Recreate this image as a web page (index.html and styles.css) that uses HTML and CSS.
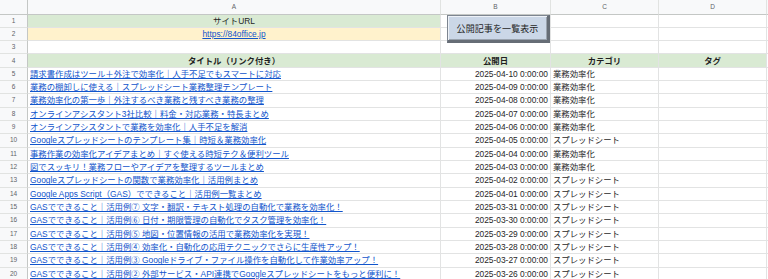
FILE: index.html
```html
<!DOCTYPE html>
<html lang="ja">
<head>
<meta charset="utf-8">
<link rel="stylesheet" href="styles.css">
</head>
<body>
<div class="sheet">
  <div class="row head">
    <div class="c rn"></div><div class="c hc">A</div><div class="c hc">B</div><div class="c hc">C</div><div class="c hc">D</div><div class="c hc"></div>
  </div>
  <div class="row">
    <div class="c rn">1</div><div class="c green center">サイトURL</div><div class="c"></div><div class="c"></div><div class="c"></div><div class="c"></div>
  </div>
  <div class="row">
    <div class="c rn">2</div><div class="c yellow center"><a class="lnk" href="#">https://84office.jp</a></div><div class="c"></div><div class="c"></div><div class="c"></div><div class="c"></div>
  </div>
  <div class="row">
    <div class="c rn">3</div><div class="c"></div><div class="c"></div><div class="c"></div><div class="c"></div><div class="c"></div>
  </div>
  <div class="row">
    <div class="c rn">4</div><div class="c green center b">タイトル（リンク付き）</div><div class="c green center b">公開日</div><div class="c green center b">カテゴリ</div><div class="c green center b">タグ</div><div class="c"></div>
  </div>
  <div class="row"><div class="c rn">5</div><div class="c"><a class="lnk" href="#">請求書作成はツール＋外注で効率化｜人手不足でもスマートに対応</a></div><div class="c right">2025-04-10 0:00:00</div><div class="c">業務効率化</div><div class="c"></div><div class="c"></div></div>
  <div class="row"><div class="c rn">6</div><div class="c"><a class="lnk" href="#">業務の棚卸しに使える｜スプレッドシート業務整理テンプレート</a></div><div class="c right">2025-04-09 0:00:00</div><div class="c">業務効率化</div><div class="c"></div><div class="c"></div></div>
  <div class="row"><div class="c rn">7</div><div class="c"><a class="lnk" href="#">業務効率化の第一歩｜外注するべき業務と残すべき業務の整理</a></div><div class="c right">2025-04-08 0:00:00</div><div class="c">業務効率化</div><div class="c"></div><div class="c"></div></div>
  <div class="row"><div class="c rn">8</div><div class="c"><a class="lnk" href="#">オンラインアシスタント3社比較｜料金・対応業務・特長まとめ</a></div><div class="c right">2025-04-07 0:00:00</div><div class="c">業務効率化</div><div class="c"></div><div class="c"></div></div>
  <div class="row"><div class="c rn">9</div><div class="c"><a class="lnk" href="#">オンラインアシスタントで業務を効率化｜人手不足を解消</a></div><div class="c right">2025-04-06 0:00:00</div><div class="c">業務効率化</div><div class="c"></div><div class="c"></div></div>
  <div class="row"><div class="c rn">10</div><div class="c"><a class="lnk" href="#">Googleスプレッドシートのテンプレート集｜時短＆業務効率化</a></div><div class="c right">2025-04-05 0:00:00</div><div class="c">スプレッドシート</div><div class="c"></div><div class="c"></div></div>
  <div class="row"><div class="c rn">11</div><div class="c"><a class="lnk" href="#">事務作業の効率化アイデアまとめ｜すぐ使える時短テク＆便利ツール</a></div><div class="c right">2025-04-04 0:00:00</div><div class="c">業務効率化</div><div class="c"></div><div class="c"></div></div>
  <div class="row"><div class="c rn">12</div><div class="c"><a class="lnk" href="#">図でスッキリ！業務フローやアイデアを整理するツールまとめ</a></div><div class="c right">2025-04-03 0:00:00</div><div class="c">業務効率化</div><div class="c"></div><div class="c"></div></div>
  <div class="row"><div class="c rn">13</div><div class="c"><a class="lnk" href="#">Googleスプレッドシートの関数で業務効率化｜活用例まとめ</a></div><div class="c right">2025-04-02 0:00:00</div><div class="c">スプレッドシート</div><div class="c"></div><div class="c"></div></div>
  <div class="row"><div class="c rn">14</div><div class="c"><a class="lnk" href="#">Google Apps Script（GAS）でできること｜活用例一覧まとめ</a></div><div class="c right">2025-04-01 0:00:00</div><div class="c">スプレッドシート</div><div class="c"></div><div class="c"></div></div>
  <div class="row"><div class="c rn">15</div><div class="c"><a class="lnk" href="#">GASでできること｜活用例⑦ 文字・翻訳・テキスト処理の自動化で業務を効率化！</a></div><div class="c right">2025-03-31 0:00:00</div><div class="c">スプレッドシート</div><div class="c"></div><div class="c"></div></div>
  <div class="row"><div class="c rn">16</div><div class="c"><a class="lnk" href="#">GASでできること｜活用例⑥ 日付・期限管理の自動化でタスク管理を効率化！</a></div><div class="c right">2025-03-30 0:00:00</div><div class="c">スプレッドシート</div><div class="c"></div><div class="c"></div></div>
  <div class="row"><div class="c rn">17</div><div class="c"><a class="lnk" href="#">GASでできること｜活用例⑤ 地図・位置情報の活用で業務効率化を実現！</a></div><div class="c right">2025-03-29 0:00:00</div><div class="c">スプレッドシート</div><div class="c"></div><div class="c"></div></div>
  <div class="row"><div class="c rn">18</div><div class="c"><a class="lnk" href="#">GASでできること｜活用例④ 効率化・自動化の応用テクニックでさらに生産性アップ！</a></div><div class="c right">2025-03-28 0:00:00</div><div class="c">スプレッドシート</div><div class="c"></div><div class="c"></div></div>
  <div class="row"><div class="c rn">19</div><div class="c"><a class="lnk" href="#">GASでできること｜活用例③ Googleドライブ・ファイル操作を自動化して作業効率アップ！</a></div><div class="c right">2025-03-27 0:00:00</div><div class="c">スプレッドシート</div><div class="c"></div><div class="c"></div></div>
  <div class="row"><div class="c rn">20</div><div class="c"><a class="lnk" href="#">GASでできること｜活用例② 外部サービス・API連携でGoogleスプレッドシートをもっと便利に！</a></div><div class="c right">2025-03-26 0:00:00</div><div class="c">スプレッドシート</div><div class="c"></div><div class="c"></div></div>

  <button class="btn" type="button">公開記事を一覧表示</button>
</div>
</body>
</html>
```

FILE: styles.css
```css
* { box-sizing: border-box; }
html, body { margin: 0; padding: 0; background: #fff; }
body {
  font-family: "Liberation Sans", "Noto Sans CJK JP", sans-serif;
  font-size: 8.4px;
  color: #1f1f1f;
  overflow: hidden;
  width: 768px;
  height: 279px;
}
.sheet { position: relative; width: 768px; }
.row {
  display: grid;
  grid-template-columns: 28px 413px 110px 108px 108px 1fr;
  height: 13.33px;
}
.row.head { height: 14.5px; }
.c {
  border-right: 1px solid #e2e3e3;
  border-bottom: 1px solid #e2e3e3;
  padding: 0 2px;
  white-space: nowrap;
  overflow: hidden;
  line-height: 12.3px;
  display: flex;
  align-items: center;
}
.rn {
  background: #f8f9fa;
  color: #5f6368;
  font-size: 6.5px;
  justify-content: center;
  border-right: 1px solid #c4c7c5;
  border-bottom: 1px solid #e1e3e1;
}
.head .c { background: #f8f9fa; border-bottom: 1px solid #c4c7c5; }
.hc { color: #5f6368; font-size: 6.5px; justify-content: center; border-right-color: #e1e3e1; }
.green { background: #d9ead3; }
.yellow { background: #fff2cc; }
.center { justify-content: center; }
.right { justify-content: flex-end; }
.b { font-weight: bold; }
.lnk { color: #1155cc; text-decoration: underline; text-underline-offset: 1px; }
.btn {
  position: absolute;
  left: 447px;
  top: 15px;
  width: 103px;
  height: 28px;
  background: #cbd7e7;
  border: 1px solid #7d8590;
  border-right: 3px solid #666d76;
  border-bottom: 3px solid #666d76;
  box-shadow: inset 1px 1px 0 #eef2f8, inset -1px -1px 0 #9aa3ae;
  font-family: "Liberation Sans", "Noto Sans CJK JP", sans-serif;
  font-size: 9px;
  color: #1f1f1f;
  padding: 0;
  letter-spacing: 0.1px;
}
```
